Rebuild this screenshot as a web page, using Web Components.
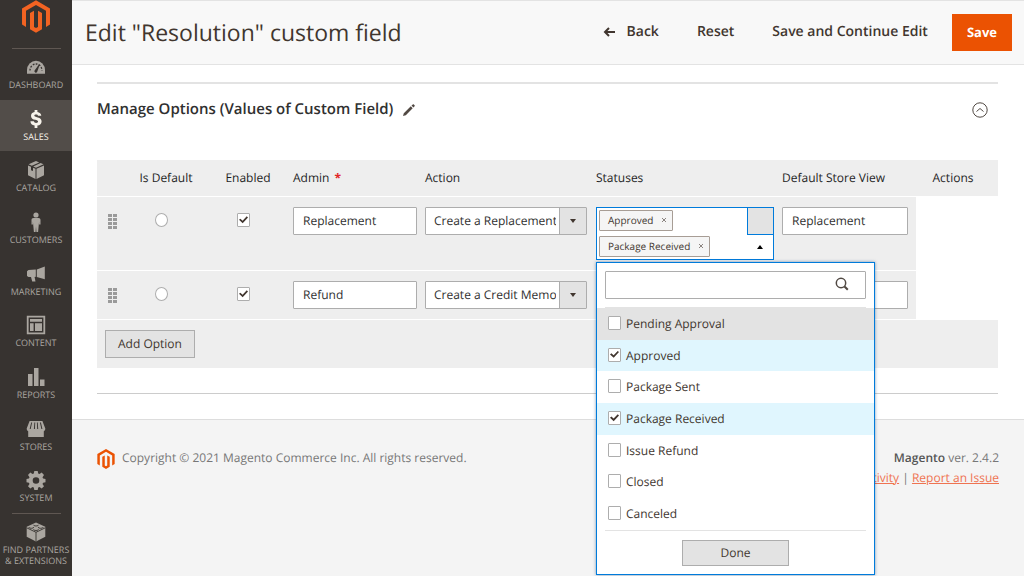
<!DOCTYPE html>
<html lang="en">
<head>
<meta charset="utf-8">
<meta name="viewport" content="width=device-width, initial-scale=1">
<title>Edit "Resolution" custom field</title>
<style>
  body { margin: 0; background: #fff; color: #41362f; font: 12px/16px "Open Sans", "Noto Sans", sans-serif; text-rendering: geometricPrecision; }
</style>
</head>
<body>
<admin-shell>
  <admin-nav slot="nav">
    <nav-item icon="dashboard">Dashboard</nav-item>
    <nav-item icon="sales" active>Sales</nav-item>
    <nav-item icon="catalog">Catalog</nav-item>
    <nav-item icon="customers">Customers</nav-item>
    <nav-item icon="marketing">Marketing</nav-item>
    <nav-item icon="content">Content</nav-item>
    <nav-item icon="reports">Reports</nav-item>
    <nav-item icon="stores">Stores</nav-item>
    <nav-item icon="system">System</nav-item>
    <nav-item slot="extra" icon="partners">Find Partners<br>&amp; Extensions</nav-item>
  </admin-nav>
  <page-header slot="header">
    <span slot="title">Edit "Resolution" custom field</span>
    <admin-button kind="text" icon="back">Back</admin-button>
    <admin-button kind="text">Reset</admin-button>
    <admin-button kind="text">Save and Continue Edit</admin-button>
    <admin-button kind="primary">Save</admin-button>
  </page-header>
  <form-section>
    <span slot="title">Manage Options (Values of Custom Field)</span>
    <options-grid></options-grid>
  </form-section>
  <page-footer slot="footer"></page-footer>
</admin-shell>

<script>
const define = (name, html, setup) => {
  const tpl = document.createElement('template');
  tpl.innerHTML = html;
  customElements.define(name, class extends HTMLElement {
    constructor() {
      super();
      this.attachShadow({ mode: 'open' }).append(tpl.content.cloneNode(true));
    }
    connectedCallback() { if (setup) setup(this, this.shadowRoot); }
  });
};

const MARK = `<svg viewBox="1.600 0 20.800 24" aria-hidden="true"><path fill="currentColor" d="M12 24l-4.455-2.572v-12l2.97-1.715v12.001l1.485.902 1.485-.902V7.713l2.971 1.715v12L12 24zM22.391 6v12l-2.969 1.714V7.713L12 3.43 4.574 7.713v12.001L1.609 18V6L12 0l10.391 6z"/></svg>`;

const CHECKBOX = `
  input[type=checkbox] { appearance: none; display: grid; place-items: center; flex: none; box-sizing: border-box; width: 13px; height: 14px; margin: 0; border: 1px solid #adadad; border-radius: 1px; background: #fff; }
  input[type=checkbox]:checked::before { content: ""; width: 9px; height: 8px; background: #41362f; clip-path: polygon(0 48%, 15% 33%, 40% 58%, 86% 4%, 100% 18%, 41% 90%); }
`;

const CONTROL_FONT = `font: 12px/16px "Open Sans", "Noto Sans", sans-serif; text-rendering: inherit;`;

const ICONS = {
  dashboard: `<path d="M1 16.800v-3.600a9 9.400 0 0 1 18 0v3.600z"/><path d="M4 13.500a6 6.500 0 0 1 12 0" fill="none" stroke="#373330" stroke-width="1.300" stroke-dasharray="1.800 1.300"/><path d="M8.600 13.500l4.300-6 .7.4-2.500 7a1.400 1.400 0 0 1-2.500-1.400z" fill="#373330"/>`,
  sales: `<path d="M8.600 1h2.800v2c2.200.3 3.700 1.500 3.900 3.800h-3.300c-.1-1-.7-1.400-1.900-1.400s-1.800.5-1.800 1.200c0 1 1 1.200 2.600 1.600 2.400.6 4.700 1.400 4.700 4.200 0 2.300-1.600 3.800-4.200 4.200V19H8.600v-2.400c-2.600-.4-4-1.900-4.200-4.300h3.500c.2 1.200 1 1.700 2.200 1.700 1.300 0 2-.5 2-1.400 0-1.100-1.100-1.300-2.900-1.800C7 10.200 5 9.500 5 6.900 5 4.700 6.300 3.300 8.600 3z"/>`,
  catalog: `<path d="M10 1l3.200 1.400-7.400 3.300L2.600 4.300zM14.600 3l3 1.300L10 7.700 7.200 6.400zM2 5.400l3 1.400v3.400l2 .9V7.700l2.500 1.100V19L2 15.300zM18 5.400v9.900L10.500 19V8.800z"/>`,
  customers: `<circle cx="10" cy="3" r="2.600"/><path d="M7.500 6h5c1.300 0 2 .8 2 2v4.600h-1.400V9.500l-.4 4-.6 6.500h-1.700L10 14.500 9.600 20H7.900l-.6-6.500-.4-4v3.100H5.500V8c0-1.200.7-2 2-2z"/>`,
  marketing: `<path d="M18.800 2.500v12.800l-8-2.300v-7.600zM9.800 5.600v7.200l-1.200.2.900 4.600H6.200L5 13H2.500L1 12V7.200l1.500-1.100z"/>`,
  content: `<path fill-rule="evenodd" d="M.8.800h18.400v18.400H.8zM2.600 2.600v14.800h14.800V2.600zM4 4h12v2.800H4zM4 8.300h3.600V16H4zM9 8.300h7V16H9z"/>`,
  reports: `<path d="M2 7h4.500v12H2zM8 1h4.500v18H8zM14 12.500h4.500V19H14z"/>`,
  stores: `<path fill-rule="evenodd" d="M3.600 2h12.800l2.900 7.600c0 1.500-.6 2.400-1.500 2.700V18H2.200v-5.700C1.300 12 .7 11.100.7 9.600zM5.200 3.500L3.700 10h1L6.100 3.500zM8.400 3.500L7.900 10h1l.3-6.500zM10.900 3.500l.3 6.500h1l-.5-6.500zM13.900 3.500l1.500 6.500h1l-1.500-6.500z"/>`,
  system: `<path fill-rule="evenodd" d="M8.300 1h3.400l.5 2.500 1.300.6 2.200-1.500 2.300 2.400-1.500 2.200.6 1.200 2.400.5v3.300l-2.400.5-.6 1.300 1.500 2.200-2.300 2.300-2.200-1.500-1.300.6-.5 2.400H8.300l-.5-2.400-1.300-.6-2.200 1.500L2 16.200 3.500 14l-.6-1.300-2.400-.5V8.900l2.400-.5.6-1.200L2 5l2.300-2.400 2.200 1.500 1.300-.6zM10 7.200a3.300 3.300 0 1 0 0 6.600 3.300 3.300 0 0 0 0-6.600z"/>`,
  partners: `<path d="M10 .500L19.300 4.800v10L10 19.500.7 14.800v-10z"/><path fill="none" stroke="#373330" stroke-width=".9" d="M.7 5.800L10 10.300l9.300-4.500M10 10.300v9"/><g fill="none" stroke="#373330" stroke-width=".9"><path d="M7.500 2.800a2.500 1.200 0 0 0 5 0M2.800 5.100a2.500 1.200 0 0 0 5 0M12.200 5.100a2.500 1.200 0 0 0 5 0M7.500 7.300a2.500 1.200 0 0 0 5 0"/></g>`
};

define('admin-shell', `
<style>
  :host { display: flex; min-height: 100vh; }
  .main { flex: 1; min-width: 0; display: flex; flex-direction: column; }
  .content { padding: 17px 26px 25px 25px; }
  .foot { flex: 1; background: #f4f4f4; border-top: 1px solid #ddd; }
</style>
<slot name="nav"></slot>
<div class="main">
  <slot name="header"></slot>
  <main class="content"><slot></slot></main>
  <div class="foot"><slot name="footer"></slot></div>
</div>`);

define('admin-nav', `
<style>
  :host { display: block; flex: none; width: 72px; background: #373330; color: #aaa6a0; }
  .logo { display: block; height: 48px; color: #f26322; text-align: center; }
  .logo svg { width: 28px; height: 33px; }
  .list { display: grid; grid-auto-rows: 1fr; min-height: 465px; }
  hr { height: 1px; margin: 0 11px 0 12px; border: 0; background: #5f5752; }
  hr.top { margin-bottom: -1px; }
</style>
<a class="logo" href="#" aria-label="Magento Admin">${MARK}</a>
<hr class="top">
<nav class="list"><slot></slot></nav>
<hr>
<slot name="extra"></slot>`);

define('nav-item', `
<style>
  :host { display: block; }
  a { display: flex; flex-direction: column; align-items: center; gap: 2px; box-sizing: border-box; height: 100%; padding-top: 9px; color: inherit; text-decoration: none; text-transform: uppercase; text-align: center; font-size: 9px; line-height: 11px; white-space: nowrap; }
  :host([slot=extra]) a { padding-top: 8px; }
  svg { width: 20px; height: 20px; fill: currentColor; }
  :host([active]) a { background: #524d49; color: #f7f3eb; }
</style>
<a href="#"><svg viewBox="0 0 20 20" aria-hidden="true"></svg><span><slot></slot></span></a>`,
(el, root) => { root.querySelector('svg').innerHTML = ICONS[el.getAttribute('icon')]; });

define('page-header', `
<style>
  :host { display: flex; align-items: center; justify-content: space-between; box-sizing: border-box; min-height: 65px; padding: 0 12px 0 13px; background: #f8f8f8; border: solid #e3e3e3; border-width: 1px 0; }
  h1 { margin: 0; padding-bottom: 2px; font-size: 23px; line-height: 32px; font-weight: 400; }
  .actions { display: flex; align-items: center; }
</style>
<h1><slot name="title"></slot></h1>
<div class="actions"><slot></slot></div>`);

define('admin-button', `
<style>
  :host { display: inline-block; }
  button { display: flex; align-items: center; justify-content: center; gap: 12px; box-sizing: border-box; width: 100%; height: 28px; padding: 0 12px 1px; border: 1px solid #adadad; background: #e3e3e3; color: #41362f; ${CONTROL_FONT} white-space: nowrap; }
  :host([kind]) button { height: 37px; border: 0; background: none; font-size: 14px; font-weight: 600; padding: 0 19px 1px; }
  :host([kind=primary]) { margin-left: 5px; }
  :host([kind=primary]) button { background: #eb5202; color: #fff; padding: 0 15px 1px; font-size: 13px; font-weight: 700; }
  :host([compact]) button { height: 26px; }
  svg { display: none; width: 12px; height: 10px; fill: none; stroke: currentColor; stroke-width: 2; }
  :host([icon=back]) svg { display: block; }
</style>
<button type="button"><svg viewBox="0 0 12 10" aria-hidden="true"><path d="M12 5H2M6 1L2 5l4 4"/></svg><slot></slot></button>`);

define('form-section', `
<style>
  :host { display: block; border-top: 2px solid #e3e3e3; border-bottom: 1px solid #ccc; padding-bottom: 25px; }
  header { display: flex; align-items: center; gap: 10px; padding: 14px 10px 38px 0; }
  h2 { margin: 0; padding-bottom: 2px; font-size: 15px; line-height: 22px; font-weight: 600; color: #303030; }
  button { display: block; padding: 0; border: 0; background: none; color: #514943; }
  .toggle { margin-left: auto; }
  svg { display: block; }
</style>
<header>
  <h2><slot name="title"></slot></h2>
  <button type="button" aria-label="Edit title"><svg width="12" height="12" viewBox="0 0 12 12" fill="currentColor"><path d="M0 12l.8-2.800L7.800 2.300 9.700 4.200 2.800 11.200zM8.500 1.600L9.800.4c.3-.3.7-.3 1 0l.8.8c.3.3.3.7 0 1l-1.200 1.300z"/></svg></button>
  <button type="button" class="toggle" aria-label="Collapse section"><svg width="16" height="16" viewBox="0 0 16 16" fill="none" stroke="currentColor"><circle cx="8" cy="8" r="7.200"/><path d="M4.500 9.500L8 6.500l3.500 3"/></svg></button>
</header>
<slot></slot>`);

define('options-grid', `
<style>
  :host { display: block; }
  table { width: 100%; table-layout: fixed; border-collapse: separate; border-spacing: 0; background: #fff; }
  .c-drag { width: 32px } .c-default { width: 74px } .c-enabled { width: 90px } .c-admin { width: 132px }
  .c-action { width: 171px } .c-status { width: 186px } .c-store { width: 134px } .c-actions { width: 82px }
  th, td { padding: 0; background: #eee; text-align: left; }
  th { height: 36px; font-size: 12px; font-weight: 400; color: #1f1f1f; }
  .mid { text-align: center; }
  .mid:last-child { padding-right: 8px; }
  td { padding: 10px 8px 10px 0; border-top: 1px solid #fff; vertical-align: top; }
  td.drag { padding-right: 0; }
  td.none { background: none; }
  .req { margin-left: 5px; color: #e22626; font-weight: 700; }
  .cell { display: flex; align-items: center; justify-content: center; box-sizing: border-box; height: 28px; padding: 0 1px 2px 0; }
  .drag .cell { padding-bottom: 0; }
  .text { box-sizing: border-box; display: block; width: 100%; height: 28px; padding: 0 9px 2px; border: 1px solid #adadad; border-radius: 1px; background: #fff; color: #303030; ${CONTROL_FONT} }
  input[type=radio] { appearance: none; box-sizing: border-box; width: 13px; height: 14px; margin: 0; border: 1px solid #adadad; border-radius: 50%; background: #fff; }
  ${CHECKBOX}
  tfoot td { padding: 10px 8px; }
  svg { display: block; fill: #9a9a9a; }
</style>
<table>
  <colgroup><col class="c-drag"><col class="c-default"><col class="c-enabled"><col class="c-admin"><col class="c-action"><col class="c-status"><col class="c-store"><col class="c-actions"></colgroup>
  <thead><tr><th></th><th class="mid">Is Default</th><th class="mid">Enabled</th><th>Admin<span class="req">*</span></th><th>Action</th><th>Statuses</th><th>Default Store View</th><th class="mid">Actions</th></tr></thead>
  <tbody></tbody>
  <tfoot><tr><td colspan="8"><admin-button>Add Option</admin-button></td></tr></tfoot>
</table>`,
(el, root) => {
  const drag = `<svg width="9" height="15" viewBox="0 0 9 15" aria-hidden="true"><path d="M0 0h4v3H0zM5 0h4v3H5zM0 4h4v3H0zM5 4h4v3H5zM0 8h4v3H0zM5 8h4v3H5zM0 12h4v3H0zM5 12h4v3H5z"/></svg>`;
  root.querySelector('tbody').innerHTML = [
    ['Replacement', 'Create a Replacement', true],
    ['Refund', 'Create a Credit Memo', false]
  ].map(([name, action, open]) => `
    <tr>
      <td class="drag"><div class="cell">${drag}</div></td>
      <td><div class="cell"><input type="radio" name="default" aria-label="${name} is default"></div></td>
      <td><div class="cell"><input type="checkbox" checked aria-label="${name} enabled"></div></td>
      <td><input class="text" type="text" value="${name}" aria-label="Admin label"></td>
      <td><admin-select value="${action}"></admin-select></td>
      <td>${open ? '<status-picker></status-picker>' : ''}</td>
      <td><input class="text" type="text" value="${name}" aria-label="Default store view label"></td>
      <td class="none"></td>
    </tr>`).join('');
});

define('admin-select', `
<style>
  :host { display: grid; grid-template-columns: 1fr 27px; height: 28px; box-sizing: border-box; border: 1px solid #adadad; border-radius: 1px; background: #fff; margin-right: 1px; }
  select { grid-area: 1 / 1 / 2 / 3; appearance: none; width: 100%; padding: 0 30px 1px 8px; border: 0; background: none; color: #303030; ${CONTROL_FONT} }
  span { grid-area: 1 / 2; display: grid; place-items: center; background: #e3e3e3; border-left: 1px solid #adadad; pointer-events: none; }
  span::before { content: ""; border: solid transparent; border-width: 4px 3px 0; border-top-color: #41362f; }
</style>
<select aria-label="Action"><option></option></select><span></span>`,
(el, root) => { root.querySelector('option').textContent = el.getAttribute('value'); });

define('status-picker', `
<style>
  :host { display: block; position: relative; }
  .box { box-sizing: border-box; display: flex; flex-direction: column; align-items: flex-start; gap: 5px; padding: 2px; border: 1px solid #007bdb; background: #fff; }
  .chip { display: flex; align-items: center; gap: 8px; box-sizing: border-box; height: 21px; padding: 0 5px 1px 8px; border: 1px solid #a79d95; border-radius: 1px; background: #f5f5f5; font-size: 10px; line-height: 16px; }
  .chip button { padding: 0; border: 0; background: none; color: #8a837f; }
  .chip svg { display: block; }
  .tab { position: absolute; top: 0; right: 0; box-sizing: border-box; width: 27px; height: 28px; border: 1px solid #007bdb; background: #e3e3e3; }
  .arrow { position: absolute; right: 11px; bottom: 11px; border: solid transparent; border-width: 0 3px 4px; border-bottom-color: #000; }
</style>
<div class="box">
  <span class="chip">Approved<button type="button" aria-label="Remove Approved"><svg width="6" height="6" viewBox="0 0 6 6" stroke="currentColor"><path d="M1 1l4 4M5 1l-4 4"/></svg></button></span>
  <span class="chip">Package Received<button type="button" aria-label="Remove Package Received"><svg width="6" height="6" viewBox="0 0 6 6" stroke="currentColor"><path d="M1 1l4 4M5 1l-4 4"/></svg></button></span>
</div>
<span class="tab"></span><span class="arrow"></span>
<status-menu></status-menu>`);

define('status-menu', `
<style>
  :host { display: block; position: absolute; z-index: 10; top: 100%; left: 0; margin-top: 2px; box-sizing: border-box; width: 279px; padding: 8px 0; border: 1px solid #007bdb; background: #fff; box-shadow: 0 0 3px rgba(0, 60, 120, .5); }
  .search { display: flex; align-items: center; box-sizing: border-box; height: 28px; margin: 0 8px 8px; padding: 0 16px 2px 8px; border: 1px solid #adadad; border-radius: 1px; }
  .search input { flex: 1; min-width: 0; border: 0; padding: 0; background: none; outline: 0; ${CONTROL_FONT} }
  ul { display: grid; grid-auto-rows: 1fr; min-height: 222px; margin: 0; padding: 0; list-style: none; }
  hr { height: 1px; margin: 0 8px; border: 0; background: #e3e3e3; }
  label { display: flex; align-items: center; gap: 5px; height: 100%; padding: 0 11px; font-size: 12px; line-height: 16px; }
  li.on { background: #e0f6fe; }
  li.hover { background: #e3e3e3; }
  ${CHECKBOX}
  label input[type=checkbox] { margin-bottom: 2px; }
  admin-button { display: block; width: 107px; margin: 9px auto 0; }
</style>
<div class="search"><input type="text" aria-label="Search statuses"><svg width="14" height="14" viewBox="0 0 14 14" fill="none" stroke="#514943" aria-hidden="true"><circle cx="6" cy="6" r="4.700" stroke-width="1.500"/><path d="M9.500 9.500l3.300 3.300" stroke-width="2"/></svg></div>
<hr>
<ul></ul>
<hr>
<admin-button compact>Done</admin-button>`,
(el, root) => {
  root.querySelector('ul').innerHTML = [
    ['Pending Approval', 'hover'], ['Approved', 'on'], ['Package Sent', ''], ['Package Received', 'on'],
    ['Issue Refund', ''], ['Closed', ''], ['Canceled', '']
  ].map(([t, c]) => `<li class="${c}"><label><input type="checkbox"${c === 'on' ? ' checked' : ''}><span>${t}</span></label></li>`).join('');
});

define('page-footer', `
<style>
  :host { display: flex; justify-content: space-between; padding: 28px 25px; color: #777; font-size: 12px; line-height: 20px; }
  .copy { display: flex; align-items: flex-start; gap: 7px; }
  .copy svg { width: 18px; height: 20px; padding-top: 1px; color: #eb5202; }
  .side { text-align: right; }
  p { margin: 0; }
  b { font-weight: 600; color: #555; }
  a { color: #ef7351; text-decoration: underline; }
</style>
<div class="copy">${MARK}<span>Copyright © 2021 Magento Commerce Inc. All rights reserved.</span></div>
<div class="side"><p><b>Magento</b> ver. 2.4.2</p><p><a href="#">Account Activity</a> | <a href="#">Report an Issue</a></p></div>`);
</script>
</body>
</html>
